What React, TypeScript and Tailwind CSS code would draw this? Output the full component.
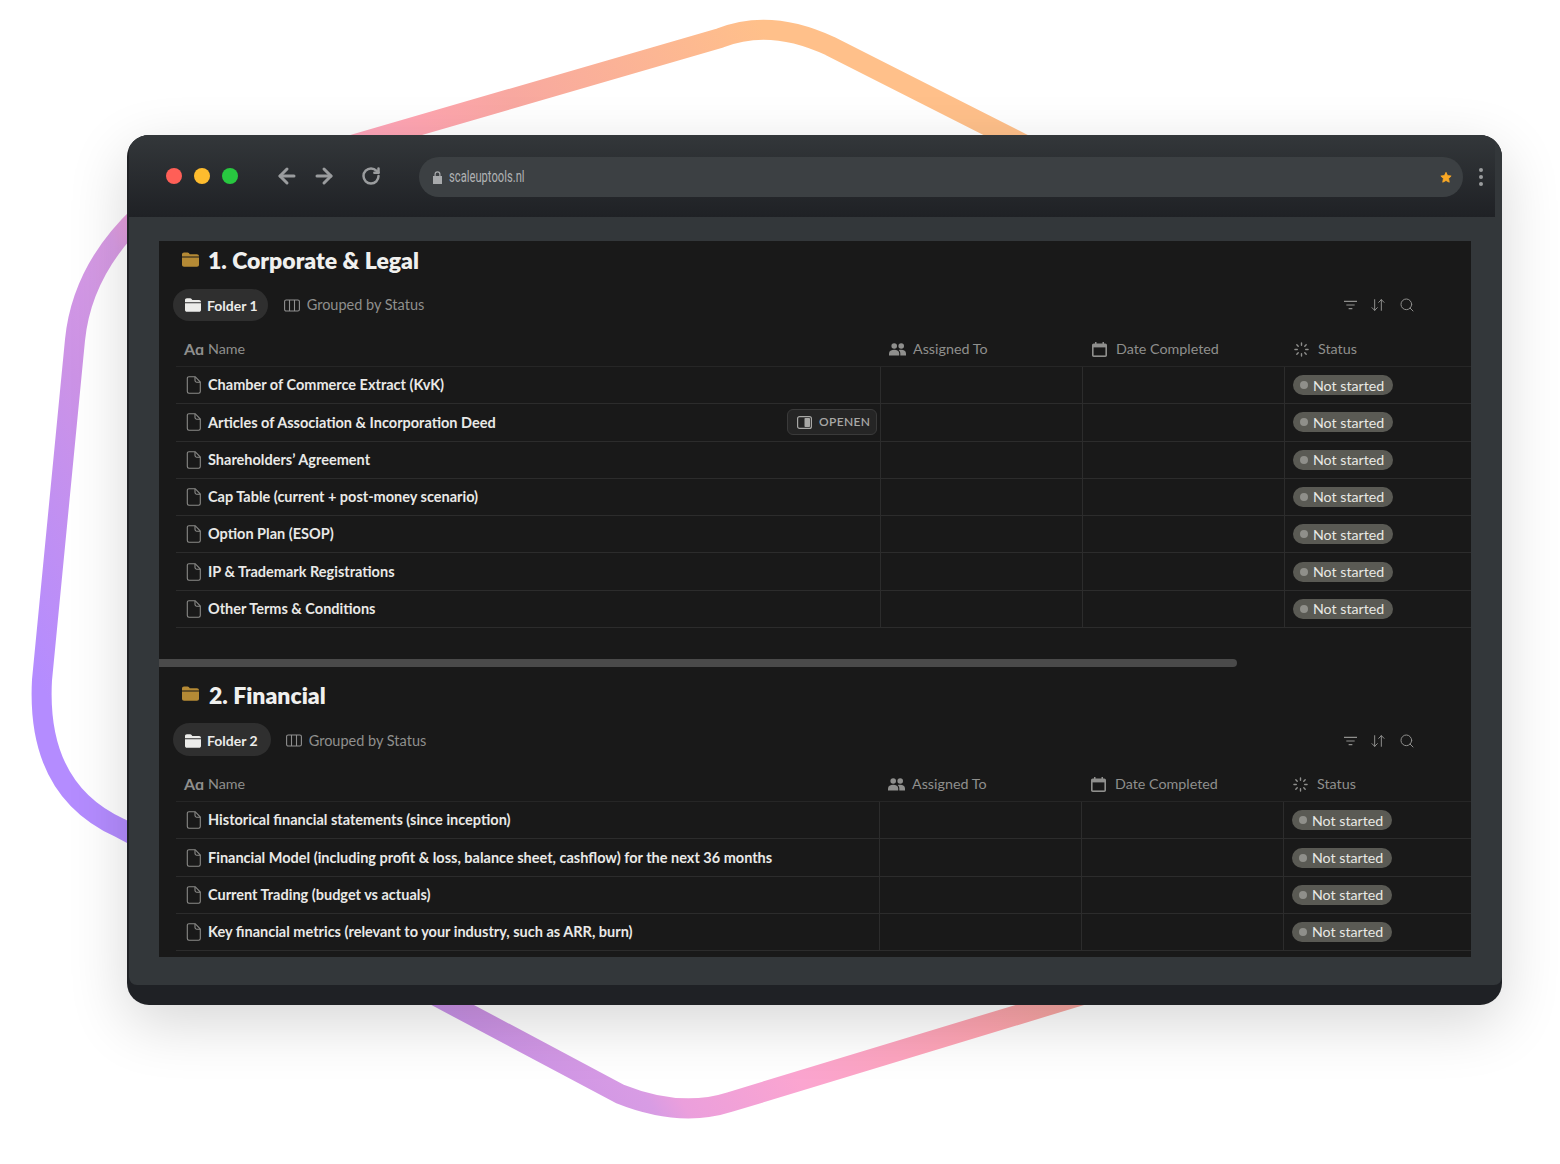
import React from 'react';
import { ArrowLeft, ArrowRight, RotateCw, Search, ArrowDownUp } from 'lucide-react';

const SECTIONS = [
  {
    title: '1. Corporate & Legal',
    tab: 'Folder 1',
    gridClass: 'grid grid-cols-[704px_202px_202px_1fr]',
    rows: [
      'Chamber of Commerce Extract (KvK)',
      'Articles of Association & Incorporation Deed',
      'Shareholders’ Agreement',
      'Cap Table (current + post-money scenario)',
      'Option Plan (ESOP)',
      'IP & Trademark Registrations',
      'Other Terms & Conditions',
    ],
  },
  {
    title: '2. Financial',
    tab: 'Folder 2',
    gridClass: 'grid grid-cols-[703px_202px_202px_1fr]',
    rows: [
      'Historical financial statements (since inception)',
      'Financial Model (including profit & loss, balance sheet, cashflow) for the next 36 months',
      'Current Trading (budget vs actuals)',
      'Key financial metrics (relevant to your industry, such as ARR, burn)',
    ],
  },
];

function FolderIcon({ className }: { className: string }) {
  return (
    <svg viewBox="0 0 16 14" className={className} fill="currentColor">
      <path d="M0 2.200C0 1 .8.300 1.900.300h3.200c.7 0 1.100.3 1.500.8l.7.900h6.800C15.200 2 16 2.800 16 3.900v.3H0z" />
      <path d="M0 5.200h16v6.700c0 1.100-.8 1.900-1.900 1.900H1.900C.8 13.800 0 13 0 11.900z" />
    </svg>
  );
}

function ColumnsIcon() {
  return (
    <svg viewBox="0 0 16 13" className="w-[16px] h-[13px] text-[#8f8f8f]" fill="none" stroke="currentColor" strokeWidth="1.100">
      <rect x="0.600" y="1" width="14.800" height="11" rx="1.600" />
      <path d="M5.500 1v11M10.500 1v11" />
    </svg>
  );
}

function DocIcon() {
  return (
    <svg viewBox="0 0 16 18" className="w-[16px] h-[18px] text-[#8a8a88] shrink-0" fill="none" stroke="currentColor" strokeWidth="1.100">
      <path d="M3 .7h6.200L14.300 6v9.600c0 1-.7 1.700-1.700 1.700H3c-1 0-1.700-.7-1.700-1.700V2.400C1.300 1.400 2 .7 3 .7z" />
      <path d="M9 .9v3.700c0 1 .6 1.600 1.600 1.600h3.600" />
    </svg>
  );
}

function PeopleIcon() {
  return (
    <svg viewBox="0 0 17 13" className="w-[17px] h-[13px] text-[#8f8f8d]" fill="currentColor">
      <circle cx="5.200" cy="3" r="2.800" />
      <circle cx="12.200" cy="3" r="2.800" />
      <path d="M0 12.600v-2C0 8 2.300 6.800 5.200 6.800s5 1.200 5 3.800v2z" />
      <path d="M11.300 12.600v-2c0-1.500-.6-2.700-1.600-3.500.8-.2 1.600-.3 2.500-.3 2.800 0 4.800 1.200 4.800 3.800v2z" />
    </svg>
  );
}

function CalendarIcon() {
  return (
    <svg viewBox="0 0 15 15" className="w-[15px] h-[15px] text-[#8f8f8d]">
      <path fill="currentColor" d="M3 0h1.500v1.500h6V0H12v1.500h1.300c.9 0 1.700.8 1.700 1.700v10.100c0 .9-.8 1.700-1.700 1.700H1.700C.8 15 0 14.200 0 13.300V3.200c0-.9.800-1.700 1.700-1.700H3z" />
      <rect x="1.600" y="5.400" width="11.800" height="8" fill="#191919" />
    </svg>
  );
}

function SpinnerIcon() {
  return (
    <svg viewBox="0 0 16 16" className="w-[15px] h-[15px] text-[#8f8f8d]" fill="none" stroke="currentColor" strokeWidth="1.500" strokeLinecap="round">
      <path d="M8 1v2.500M8 12.500V15M1 8h2.500M12.500 8H15M3 3l1.500 1.500M11.500 11.500 13 13M3 13l1.500-1.500M11.500 4.500 13 3" />
    </svg>
  );
}

function FilterIcon() {
  return (
    <svg viewBox="0 0 14 10" className="w-[13px] h-[10px] text-[#8f8f8d]" fill="none" stroke="currentColor" strokeWidth="1.300">
      <path d="M0 1h14M2.500 5h9M5 9h4" />
    </svg>
  );
}

function SidePeekIcon() {
  return (
    <svg viewBox="0 0 15 13" className="w-[15px] h-[13px] text-[#a8a8a6]">
      <rect x="0.600" y="0.600" width="13.800" height="11.800" rx="2" fill="none" stroke="currentColor" strokeWidth="1.200" />
      <rect x="7.500" y="2" width="5.500" height="9" rx="0.800" fill="currentColor" />
    </svg>
  );
}

function HeaderCell({ icon, label, className }: { icon: React.ReactNode; label: string; className: string }) {
  return (
    <div className={`flex items-center text-[14.300px] text-[#8f8f8d] ${className}`}>
      <span className="w-[24px] shrink-0 flex items-center">{icon}</span>
      {label}
    </div>
  );
}

function Database({ section, first }: { section: (typeof SECTIONS)[number]; first: boolean }) {
  const tabText = first ? '' : 'pt-[2px]';
  return (
    <div>
      <div className={first ? 'h-[40px] flex items-center pl-[23px]' : 'mt-[7px] h-[40px] flex items-center pl-[23px]'}>
        <FolderIcon className={first ? 'w-[17px] h-[15px] text-[#b58a35] -mt-[4px]' : 'w-[17px] h-[15px] text-[#b58a35] -mt-[2px]'} />
        <h1 className={first ? 'ml-[9px] -mt-[2px] text-[23px] font-extrabold text-[#f0f0ee]' : 'ml-[10px] mt-[2px] text-[23px] font-extrabold text-[#f0f0ee]'}>{section.title}</h1>
      </div>

      <div className={first ? 'mt-[8px] h-[32px] flex items-center pl-[14px]' : 'mt-[9px] h-[33px] flex items-center pl-[14px]'}>
        <div className={`h-full rounded-full bg-[#2f2f2f] pl-[12px] flex items-center text-[14px] font-bold text-[#ececea] ${first ? 'pr-[10px]' : 'pr-[13px] pt-[2px]'}`}>
          <FolderIcon className="w-[16px] h-[14px] text-[#ececea] mr-[6px]" />
          {section.tab}
        </div>
        <div className={`flex items-center text-[14.500px] text-[#8f8f8d] ${first ? 'ml-[16px]' : 'ml-[15px] pt-[2px]'}`}>
          <ColumnsIcon />
          <span className="ml-[7px]">Grouped by Status</span>
        </div>
        <div className={`ml-auto mr-[56px] flex items-center gap-[13px] text-[#8f8f8d] ${tabText}`}>
          <FilterIcon />
          <ArrowDownUp className="w-[16px] h-[16px]" strokeWidth={1.500} />
          <Search className="w-[16px] h-[16px]" strokeWidth={1.500} />
        </div>
      </div>

      <div className="ml-[17px]">
        <div className={`${section.gridClass} mt-[11px] h-[35px] border-b border-[#262626]`}>
          <HeaderCell
            className="pl-[8px]"
            label="Name"
            icon={<span className="font-bold text-[16px] leading-none text-[#8f8f8d]">Aɑ</span>}
          />
          <HeaderCell className="pl-[9px]" label="Assigned To" icon={<PeopleIcon />} />
          <HeaderCell className="pl-[10px]" label="Date Completed" icon={<CalendarIcon />} />
          <HeaderCell className="pl-[10px]" label="Status" icon={<SpinnerIcon />} />
        </div>
        {section.rows.map((name) => (
          <div key={name} className={`${section.gridClass} h-[37.300px] border-b border-[#2c2c2c]`}>
            <div className="pl-[10px] pr-[3px] flex items-center">
              <DocIcon />
              <span className="ml-[6px] text-[14.500px] font-bold text-[#e9e9e7]">{name}</span>
              {name.startsWith('Articles') && (
                <div className="ml-auto h-[26px] w-[90px] rounded-[6px] border border-[#3a3a3a] bg-[#252525] flex items-center pl-[9px] gap-[7px] text-[12px] font-semibold tracking-[0.03em] text-[#a8a8a6]">
                  <SidePeekIcon />
                  OPENEN
                </div>
              )}
            </div>
            <div className="border-l border-[#2c2c2c]" />
            <div className="border-l border-[#2c2c2c]" />
            <div className="border-l border-[#2c2c2c] pl-[8px] flex items-center">
              <div className="h-[20px] w-[100px] rounded-full bg-[#5a5a54] flex items-center pl-[7px] text-[14.200px] text-[#e9e9e4]">
                <span className="w-[8px] h-[8px] rounded-full bg-[#8f8f8a] mr-[5px]" />
                Not started
              </div>
            </div>
          </div>
        ))}
      </div>
    </div>
  );
}

export default function App() {
  return (
    <div className="relative w-[1560px] h-[1164px] overflow-hidden bg-white pl-[127px] pt-[135px] font-['Lato',sans-serif]">
      <svg className="absolute left-0 top-0" width="1560" height="1164" fill="none">
        <defs>
          <linearGradient id="ring" gradientUnits="userSpaceOnUse" x1="103" y1="825" x2="944" y2="301">
            <stop offset="0.02" stopColor="#b48cff" />
            <stop offset="0.215" stopColor="#cc93e6" />
            <stop offset="0.32" stopColor="#d89ce4" />
            <stop offset="0.348" stopColor="#eb9fdc" />
            <stop offset="0.46" stopColor="#fba5d0" />
            <stop offset="0.65" stopColor="#ffa5b0" />
            <stop offset="0.74" stopColor="#f8a8a0" />
            <stop offset="0.99" stopColor="#ffc08a" />
          </linearGradient>
        </defs>
        <path
          d="M720 38Q770 18 830 46L1400 335L1300 929L730 1102Q680 1118 620 1094L120 828Q36 790 42 680L75 340Q82 270 140 215L200 189Z"
          stroke="url(#ring)"
          strokeWidth="20"
        />
      </svg>

      <div className="relative w-[1375px] h-[870px] rounded-[22px] overflow-hidden bg-[#1f2125] pl-[2px] shadow-[0_18px_60px_rgba(0,0,0,0.16)]">
        <div className="h-[850px] rounded-b-[8px] bg-[#33373a] flex flex-col">
          <div className="h-[82px] mr-[7px] shrink-0 bg-gradient-to-b from-[#33373a] to-[#1f2125] flex items-center">
            <div className="flex items-center gap-[12px] ml-[37px]">
              <span className="w-[16px] h-[16px] rounded-full bg-[#ff5f57]" />
              <span className="w-[16px] h-[16px] rounded-full bg-[#febc2e]" />
              <span className="w-[16px] h-[16px] rounded-full bg-[#28c840]" />
            </div>
            <ArrowLeft className="ml-[37px] w-[24px] h-[24px] text-[#9a9c9e]" strokeWidth={3} />
            <ArrowRight className="ml-[13px] w-[24px] h-[24px] text-[#9a9c9e]" strokeWidth={3} />
            <RotateCw className="ml-[25px] w-[20px] h-[20px] text-[#9a9c9e]" strokeWidth={3} />
            <div className="ml-[38px] mt-[2px] w-[1044px] h-[40px] rounded-[20px] bg-[#3c4043] flex items-center pl-[14px] pr-[11px]">
              <svg viewBox="0 0 9 13" className="w-[9px] h-[13px]" fill="#a8aaac">
                <path d="M1.500 5V3.200a3 3 0 0 1 6 0V5H9v8H0V5zm1.200 0h3.600V3.200a1.800 1.800 0 0 0-3.600 0z" />
              </svg>
              <span className="ml-[7px] inline-block origin-left scale-x-[0.7] text-[16px] text-[#b0b2b4] font-['Roboto',sans-serif]">scaleuptools.nl</span>
              <svg viewBox="0 0 14 14" className="ml-auto w-[12px] h-[13px]" fill="#f9a825" stroke="#f9a825" strokeLinejoin="round">
                <path d="M7 1l1.800 3.800 4.200.500-3 2.900.8 4.300L7 10.500l-3.800 2 .8-4.300-3-2.900 4.200-.5z" />
              </svg>
            </div>
            <div className="ml-[16px] mt-[2px] flex flex-col gap-[3px]">
              <span className="w-[4px] h-[4px] rounded-full bg-[#9a9c9e]" />
              <span className="w-[4px] h-[4px] rounded-full bg-[#9a9c9e]" />
              <span className="w-[4px] h-[4px] rounded-full bg-[#9a9c9e]" />
            </div>
          </div>

          <div className="mt-[24px] ml-[30px] w-[1312px] h-[716px] overflow-hidden bg-[#191919]">
            <Database section={SECTIONS[0]} first />
            <div className="mt-[31px] w-[1078px] h-[8px] rounded-r-full bg-[#4a4a4a]" />
            <Database section={SECTIONS[1]} first={false} />
          </div>
        </div>
      </div>
    </div>
  );
}
